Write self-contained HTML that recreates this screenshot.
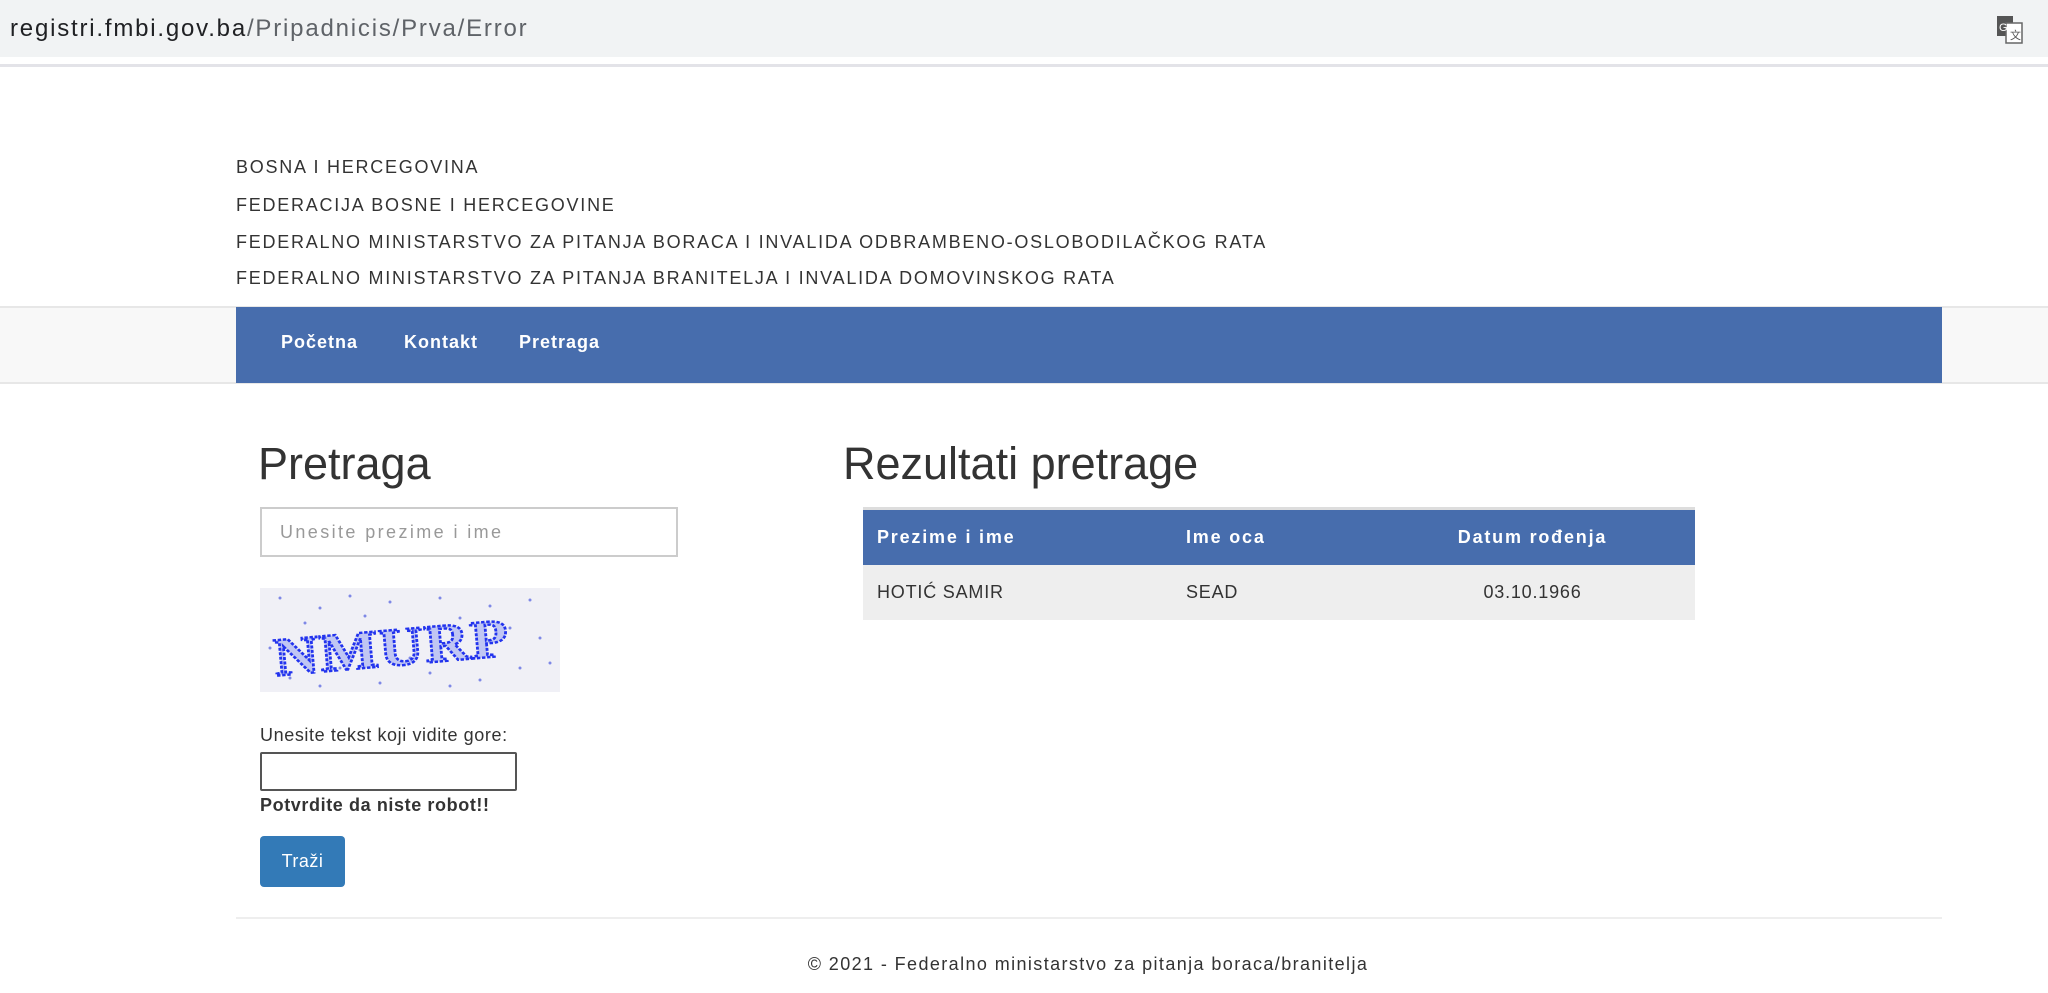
<!DOCTYPE html>
<html><head><meta charset="utf-8"><style>
*{box-sizing:border-box;margin:0;padding:0}
body{width:2048px;height:993px;background:#fff;font-family:"Liberation Sans",Arial,sans-serif;color:#333;position:relative;overflow:hidden;letter-spacing:1.4px}
.abs{position:absolute}
.url{left:0;top:0;width:2048px;height:57px;background:#f1f3f4}
.urlt{left:10px;top:15px;font-size:24px;color:#202124;white-space:nowrap;letter-spacing:1.8px}
.urlt span{color:#5f6368}
.line{left:0;top:64px;width:2048px;height:3px;background:#e3e3e8}
.hd{left:236px;font-size:18px;color:#333;white-space:nowrap;letter-spacing:1.75px}
.navbg{left:0;top:306px;width:2048px;height:78px;background:#f8f8f8;border-top:2px solid #e7e7e7;border-bottom:2px solid #e7e7e7}
.nav{left:236px;top:307px;width:1706px;height:76px;background:#476dad}
.ni{top:332px;font-size:18px;font-weight:bold;color:#fff;letter-spacing:1px}
h1{position:absolute;font-weight:normal;font-size:45px;color:#333;letter-spacing:0}
.inp{left:260px;top:507px;width:418px;height:50px;border:2px solid #ccc;background:#fff;font-size:18px;color:#999;padding:13px 18px;letter-spacing:2.4px}
.lbl{left:260px;font-size:18px;letter-spacing:0.6px}
.btn{left:260px;top:836px;width:85px;height:51px;background:#337ab7;border-radius:4px;color:#fff;font-size:18px;text-align:center;line-height:51px;letter-spacing:0.5px}
table{position:absolute;left:863px;top:507px;width:832px;border-collapse:collapse;font-size:18px}
th{background:#476dad;color:#fff;text-align:left;height:56px;padding-left:14px;border-top:3px solid #ddd;letter-spacing:1.8px}
td{background:#eee;height:55px;padding-left:14px;letter-spacing:0.8px}
</style></head><body>
<div class="abs url"></div>
<div class="abs urlt">registri.fmbi.gov.ba<span>/Pripadnicis/Prva/Error</span></div>
<svg class="abs" style="left:1997px;top:16px" width="26" height="28" viewBox="0 0 26 28"><rect x="0" y="0" width="16" height="20" fill="#555"/><rect x="9" y="7" width="16" height="20" fill="#fff" stroke="#666" stroke-width="1.5"/><text x="2" y="15" font-size="11" fill="#fff" font-family="Liberation Sans">G</text><text x="13" y="23" font-size="11" fill="#555" font-family="Liberation Sans">文</text></svg>
<div class="abs line"></div>
<div class="abs hd" style="top:157px">BOSNA I HERCEGOVINA</div>
<div class="abs hd" style="top:195px">FEDERACIJA BOSNE I HERCEGOVINE</div>
<div class="abs hd" style="top:232px">FEDERALNO MINISTARSTVO ZA PITANJA BORACA I INVALIDA ODBRAMBENO-OSLOBODILAČKOG RATA</div>
<div class="abs hd" style="top:268px">FEDERALNO MINISTARSTVO ZA PITANJA BRANITELJA I INVALIDA DOMOVINSKOG RATA</div>
<div class="abs navbg"></div>
<div class="abs nav"></div>
<div class="abs ni" style="left:281px">Početna</div>
<div class="abs ni" style="left:404px">Kontakt</div>
<div class="abs ni" style="left:519px">Pretraga</div>
<h1 style="left:258px;top:438px">Pretraga</h1>
<h1 style="left:843px;top:438px">Rezultati pretrage</h1>
<div class="abs inp">Unesite prezime i ime</div>
<svg class="abs" style="left:260px;top:588px" width="300" height="104" viewBox="0 0 300 104"><rect width="300" height="104" fill="#f0f0f6"/>
<g fill="#3344dd" opacity=".6"><circle cx="20" cy="10" r="1.5"/><circle cx="60" cy="20" r="1.5"/><circle cx="90" cy="8" r="1.5"/><circle cx="130" cy="14" r="1.5"/><circle cx="180" cy="10" r="1.5"/><circle cx="230" cy="18" r="1.5"/><circle cx="270" cy="12" r="1.5"/><circle cx="280" cy="50" r="1.5"/><circle cx="30" cy="90" r="1.5"/><circle cx="80" cy="80" r="1.5"/><circle cx="120" cy="95" r="1.5"/><circle cx="170" cy="85" r="1.5"/><circle cx="220" cy="92" r="1.5"/><circle cx="260" cy="80" r="1.5"/><circle cx="10" cy="60" r="1.5"/><circle cx="150" cy="70" r="1.5"/><circle cx="45" cy="35" r="1.5"/><circle cx="105" cy="28" r="1.5"/><circle cx="200" cy="30" r="1.5"/><circle cx="250" cy="40" r="1.5"/><circle cx="290" cy="75" r="1.5"/><circle cx="60" cy="98" r="1.5"/><circle cx="190" cy="98" r="1.5"/><circle cx="100" cy="62" r="1.5"/></g>
<text x="14" y="76" font-family="Liberation Serif" font-size="54" font-weight="bold" fill="#6677ee" fill-opacity=".35" stroke="#2233ee" stroke-width="2.5" stroke-dasharray="3 1.5" textLength="236" lengthAdjust="spacingAndGlyphs" transform="rotate(-5 150 60)">NMURP</text></svg>
<div class="abs lbl" style="top:725px">Unesite tekst koji vidite gore:</div>
<div class="abs" style="left:260px;top:752px;width:257px;height:39px;border:2px solid #555;border-radius:2px"></div>
<div class="abs lbl" style="top:795px;font-weight:bold">Potvrdite da niste robot!!</div>
<div class="abs btn">Traži</div>
<table><tr><th style="width:309px">Prezime i ime</th><th style="width:274px">Ime oca</th><th style="text-align:center;padding:0 76px 0 0">Datum rođenja</th></tr>
<tr><td>HOTIĆ SAMIR</td><td>SEAD</td><td style="text-align:center;padding:0 76px 0 0">03.10.1966</td></tr></table>
<div class="abs" style="left:236px;top:917px;width:1706px;height:2px;background:#eee"></div>
<div class="abs" style="left:0;width:2176px;top:954px;text-align:center;font-size:18px">© 2021 - Federalno ministarstvo za pitanja boraca/branitelja</div>
</body></html>
